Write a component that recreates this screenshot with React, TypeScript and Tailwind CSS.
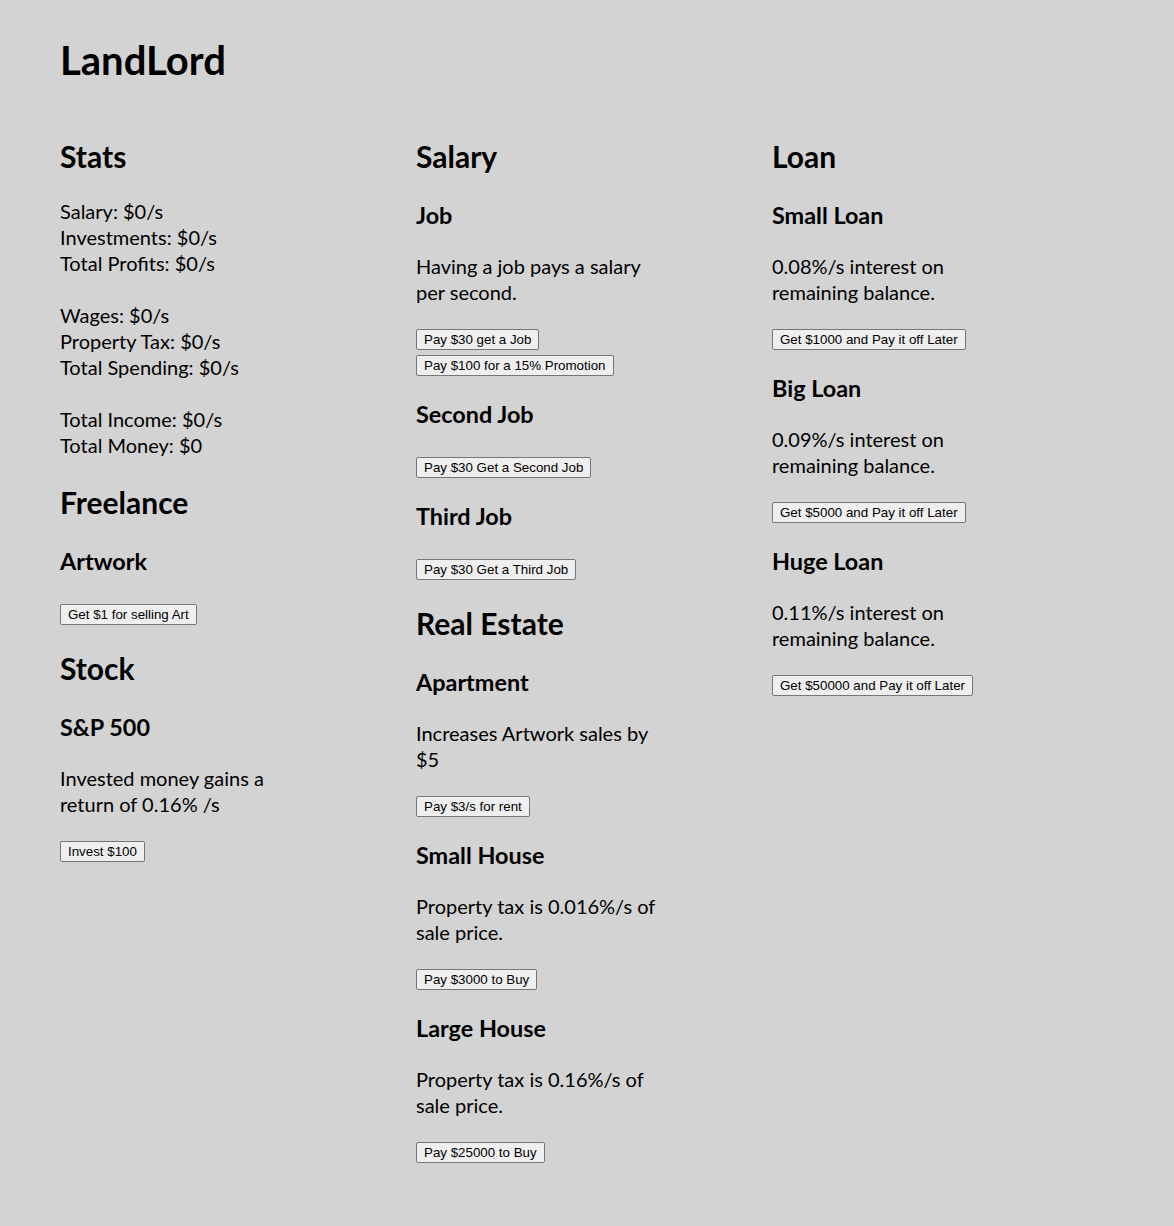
import React from 'react';

type Item = {
  title: string;
  text?: string;
  buttons: string[];
};

const font = "font-['Lato','Noto_Sans',sans-serif]";

const Btn: React.FC<{ label: string; first: boolean; afterText: boolean }> = ({ label, first, afterText }) => (
  <button
    className={`${first ? (afterText ? 'mt-[24px]' : 'mt-[28px]') : 'mt-[5px]'} h-[21px] px-[7px] border border-[#767676] rounded-[2px] bg-[#efefef] text-[13.33px] leading-[normal] text-black font-['Liberation_Sans',Arial,sans-serif] whitespace-nowrap`}
  >
    {label}
  </button>
);

const Block: React.FC<{ item: Item; afterHeading: boolean }> = ({ item, afterHeading }) => (
  <>
    <h3 className={`${afterHeading ? 'mt-[26px]' : 'mt-[23px]'} text-[23.4px] leading-[30px] font-bold`}>{item.title}</h3>
    {item.text && <p className="mt-[23px] max-w-[250px] text-[20px] leading-[26px]">{item.text}</p>}
    {item.buttons.map((b, i) => (
      <Btn key={b} label={b} first={i === 0} afterText={!!item.text} />
    ))}
  </>
);

const Section: React.FC<{ title: string; items: Item[]; top?: string }> = ({ title, items, top = 'mt-[25px]' }) => (
  <>
    <h2 className={`${top} text-[30px] leading-[36px] font-bold`}>{title}</h2>
    {items.map((it, i) => (
      <Block key={it.title} item={it} afterHeading={i === 0} />
    ))}
  </>
);

const salary: Item[] = [
  { title: 'Job', text: 'Having a job pays a salary per second.', buttons: ['Pay $30 get a Job', 'Pay $100 for a 15% Promotion'] },
  { title: 'Second Job', buttons: ['Pay $30 Get a Second Job'] },
  { title: 'Third Job', buttons: ['Pay $30 Get a Third Job'] },
];

const realEstate: Item[] = [
  { title: 'Apartment', text: 'Increases Artwork sales by $5', buttons: ['Pay $3/s for rent'] },
  { title: 'Small House', text: 'Property tax is 0.016%/s of sale price.', buttons: ['Pay $3000 to Buy'] },
  { title: 'Large House', text: 'Property tax is 0.16%/s of sale price.', buttons: ['Pay $25000 to Buy'] },
];

const loans: Item[] = [
  { title: 'Small Loan', text: '0.08%/s interest on remaining balance.', buttons: ['Get $1000 and Pay it off Later'] },
  { title: 'Big Loan', text: '0.09%/s interest on remaining balance.', buttons: ['Get $5000 and Pay it off Later'] },
  { title: 'Huge Loan', text: '0.11%/s interest on remaining balance.', buttons: ['Get $50000 and Pay it off Later'] },
];

export default function App() {
  return (
    <div className={`min-h-[1226px] bg-[#d3d3d3] text-black ${font} px-[60px] pt-[34px]`}>
      <h1 className="text-[40px] leading-[52px] font-bold">LandLord</h1>

      <div className="mt-[52px] grid grid-cols-[356px_356px_356px]">
        {/* Stats / Freelance / Stock */}
        <div className="flex flex-col items-start">
          <h2 className="text-[30px] leading-[36px] font-bold">Stats</h2>
          <div className="mt-[24px] text-[20px] leading-[26px]">
            <p>Salary: $0/s</p>
            <p>Investments: $0/s</p>
            <p>Total Profits: $0/s</p>
            <p className="mt-[26px]">Wages: $0/s</p>
            <p>Property Tax: $0/s</p>
            <p>Total Spending: $0/s</p>
            <p className="mt-[26px]">Total Income: $0/s</p>
            <p>Total Money: $0</p>
          </div>
          <Section title="Freelance" top="mt-[26px]" items={[{ title: 'Artwork', buttons: ['Get $1 for selling Art'] }]} />
          <Section
            title="Stock"
            items={[{ title: 'S&P 500', text: 'Invested money gains a return of 0.16% /s', buttons: ['Invest $100'] }]}
          />
        </div>

        {/* Salary / Real Estate */}
        <div className="flex flex-col items-start">
          <Section title="Salary" items={salary} top="" />
          <Section title="Real Estate" items={realEstate} />
        </div>

        {/* Loan */}
        <div className="flex flex-col items-start">
          <Section title="Loan" items={loans} top="" />
        </div>
      </div>
    </div>
  );
}
